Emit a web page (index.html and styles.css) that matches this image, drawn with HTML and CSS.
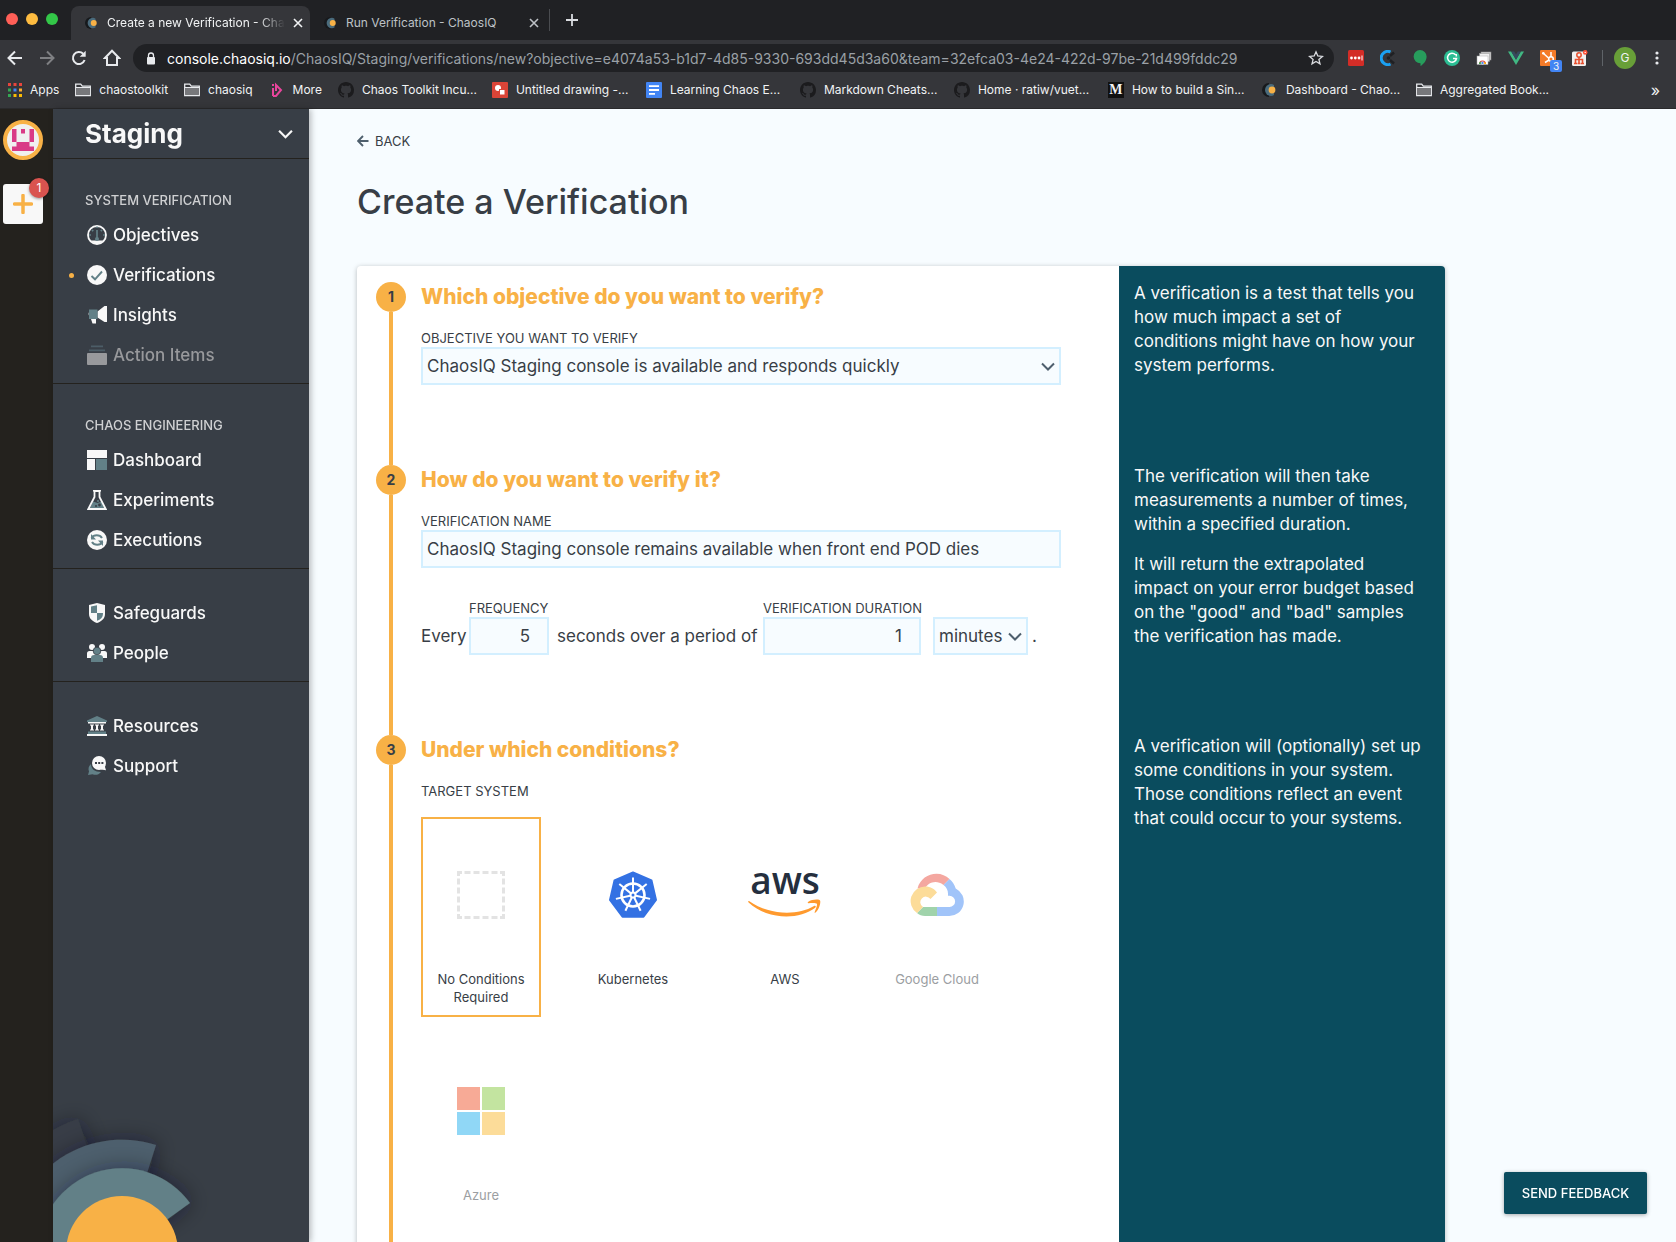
FILE: index.html
```html
<!DOCTYPE html>
<html lang="en">
<head>
<meta charset="utf-8">
<title>Create a new Verification - ChaosIQ</title>
<link rel="stylesheet" href="styles.css">
</head>
<body>
<svg class="defs" aria-hidden="true">
  <defs>
    <symbol id="favicon" viewBox="0 0 16 16"><path d="M7 1a7 7 0 0 0 0 14z" fill="#17191c"/><path d="M9 2a6 6 0 0 0 0 12 6 6 0 0 0 3-1V3a6 6 0 0 0-3-1z" fill="#4a6b7c"/><circle cx="10" cy="8" r="3.4" fill="#f8b146"/></symbol>
    <symbol id="folder" viewBox="0 0 16 16"><path d="M.7 13.5V2.2h5l1.600 2h8v9.300z" fill="#35363a" stroke="#e8eaed" stroke-width="1.300"/><path d="M1.300 6h13.400v7H1.300z" fill="#77787b"/><path d="M.7 5.500h14.600" stroke="#e8eaed"/></symbol>
    <symbol id="github" viewBox="0 0 16 16"><path fill="#1b1b1d" d="M8 0C3.580 0 0 3.580 0 8c0 3.540 2.290 6.530 5.470 7.590.4.070.55-.17.55-.38 0-.19-.01-.82-.01-1.490-2.010.37-2.530-.49-2.690-.94-.09-.23-.48-.94-.82-1.130-.28-.15-.68-.52-.01-.53.63-.01 1.080.58 1.230.82.72 1.210 1.870.87 2.330.66.070-.52.28-.87.51-1.070-1.780-.2-3.640-.89-3.640-3.950 0-.87.31-1.590.82-2.150-.08-.2-.36-1.020.08-2.120 0 0 .67-.21 2.200.82.64-.18 1.320-.27 2-.27s1.360.09 2 .27c1.530-1.040 2.200-.82 2.200-.82.44 1.100.16 1.920.08 2.120.51.56.82 1.270.82 2.150 0 3.070-1.870 3.750-3.650 3.950.29.25.54.73.54 1.480 0 1.070-.01 1.930-.01 2.200 0 .21.15.46.55.38A8 8 0 0 0 16 8c0-4.420-3.580-8-8-8z"/></symbol>
    <symbol id="chevron" viewBox="0 0 14 14"><path d="M1 4.500l6 6 6-6" fill="none" stroke="currentColor" stroke-width="2"/></symbol>
    <symbol id="cross" viewBox="0 0 10 10"><path d="M1 1l8 8M9 1L1 9" stroke="currentColor" stroke-width="1.600"/></symbol>
  </defs>
</svg>

<header class="chrome">
  <div class="tabstrip">
    <div class="lights"><span class="light red"></span><span class="light yellow"></span><span class="light green"></span></div>
    <div class="tab active">
      <svg class="fav"><use href="#favicon"/></svg>
      <span class="tab-title">Create a new Verification - Cha</span>
      <button class="bare" aria-label="Close tab"><svg class="close"><use href="#cross"/></svg></button>
    </div>
    <div class="tab">
      <svg class="fav"><use href="#favicon"/></svg>
      <span class="tab-title">Run Verification - ChaosIQ</span>
      <button class="bare" aria-label="Close tab"><svg class="close"><use href="#cross"/></svg></button>
    </div>
    <button class="bare newtab" aria-label="New tab"><svg width="12" height="12" viewBox="0 0 12 12"><path d="M6 0v12M0 6h12" stroke="currentColor" stroke-width="1.800"/></svg></button>
  </div>

  <div class="toolbar">
    <div class="navbtns">
      <button class="bare" aria-label="Back"><svg width="16" height="16" viewBox="0 0 16 16" fill="none" stroke="#e8eaed" stroke-width="2"><path d="M15 8H2M8 1.500 1.500 8 8 14.500"/></svg></button>
      <button class="bare" aria-label="Forward"><svg width="16" height="16" viewBox="0 0 16 16" fill="none" stroke="#7f8083" stroke-width="2"><path d="M1 8h13M8 1.500 14.500 8 8 14.500"/></svg></button>
      <button class="bare" aria-label="Reload"><svg width="16" height="16" viewBox="0 0 16 16"><path d="M13.600 10A6 6 0 1 1 12.200 3.800" fill="none" stroke="#e8eaed" stroke-width="2"/><path d="M14.700.8v6H8.700z" fill="#e8eaed"/></svg></button>
      <button class="bare" aria-label="Home"><svg width="18" height="18" viewBox="0 0 18 18"><path d="M9 1.800 16 9h-2v7H4V9H2z" fill="none" stroke="#e8eaed" stroke-width="2"/></svg></button>
    </div>
    <div class="omnibox">
      <svg width="10" height="13" viewBox="0 0 10 13"><path d="M2.500 6V3.500a2.500 2.500 0 0 1 5 0V6" fill="none" stroke="#e8eaed" stroke-width="1.300"/><rect x="1" y="5" width="8" height="7.500" rx="1" fill="#e8eaed"/></svg>
      <span class="url"><b>console.chaosiq.io</b>/ChaosIQ/Staging/verifications/new?objective=e4074a53-b1d7-4d85-9330-693dd45d3a60&amp;team=32efca03-4e24-422d-97be-21d499fddc29</span>
      <button class="bare" aria-label="Bookmark this page"><svg width="16" height="16" viewBox="0 0 16 16"><path d="M8 1.800 9.800 6l4.600.4-3.500 3 1.100 4.500L8 11.500l-4 2.400 1.100-4.500-3.500-3L6.200 6z" fill="none" stroke="#dadce0" stroke-width="1.300"/></svg></button>
    </div>
    <div class="extensions">
      <svg class="i16" viewBox="0 0 16 16"><rect width="16" height="16" rx="1.500" fill="#d32d27"/><circle cx="3.500" cy="8" r="1.400" fill="#fff"/><circle cx="7.300" cy="8" r="1.400" fill="#fff"/><circle cx="11" cy="8" r="1.400" fill="#fff"/><path d="M14 5.500v5" stroke="#fff"/></svg>
      <svg class="i16" viewBox="0 0 16 16"><path d="M10.500 2A6.600 6.600 0 1 0 10.500 14" fill="none" stroke="#1ba1f2" stroke-width="3"/><circle cx="8.500" cy="8" r="1.800" fill="#1f2023"/><path d="M10 6l4-3.500M10 10l4 3.500" stroke="#1f2023" stroke-width="2.500"/></svg>
      <svg class="i16" viewBox="0 0 16 16"><path d="M8 0a6.600 6.600 0 0 1 6.600 6.700C14.600 11 11 14.500 8.500 16v-2.800A6.600 6.600 0 1 1 8 0z" fill="#279d5c"/></svg>
      <svg class="i16" viewBox="0 0 16 16"><circle cx="8" cy="8" r="8" fill="#2bbd93"/><path d="M11.500 4.800A4.500 4.500 0 1 0 12.500 8.500H9M12.300 4v2.500" fill="none" stroke="#fff" stroke-width="1.500"/></svg>
      <svg class="i16" viewBox="0 0 16 16"><rect x="5" y="2" width="10" height="8" fill="#d8d8d8" stroke="#8a8a8a" stroke-width=".6"/><rect x="3.500" y="3.500" width="10" height="8" fill="#f0f0f0" stroke="#999" stroke-width=".6"/><rect x="1" y="6" width="11" height="8.500" fill="#fff" stroke="#aaa" stroke-width=".5"/><path d="M3 14a3.500 3.500 0 0 1 7 0" fill="#ea4335"/><path d="M3 14a3.500 3.500 0 0 1 1.200-2.500L6.500 14z" fill="#34a853"/><path d="M10 14a3.500 3.500 0 0 0-.8-2L6.500 14z" fill="#fbbc04"/><circle cx="6.500" cy="13" r="1.400" fill="#4285f4" stroke="#fff" stroke-width=".5"/></svg>
      <svg class="i16" viewBox="0 0 16 16"><path d="M0 1.500h3.200L8 9.800l4.800-8.300H16L8 15z" fill="#41b883"/><path d="M3.200 1.500H6.200L8 4.600l1.800-3.100h3L8 9.800z" fill="#35495e"/></svg>
      <div class="hub"><svg class="i16" viewBox="0 0 16 16"><rect width="16" height="16" rx="1" fill="#f47b28"/><path d="M3 3l5.500 5M11 2v5M5 12.500 9 10" stroke="#fff" stroke-width="1.500"/><circle cx="11" cy="9" r="2.300" fill="none" stroke="#fff" stroke-width="1.500"/><circle cx="3.300" cy="3.300" r="1.300" fill="#fff"/></svg><span class="hub-badge">3</span></div>
      <svg class="i16" viewBox="0 0 16 16"><rect x="0" y="1.500" width="14" height="14.500" rx="1.500" fill="#f2f0ef"/><circle cx="7" cy="5" r="2.200" fill="none" stroke="#e8502f" stroke-width="1.500"/><path d="M7 7v7M3.500 13V9.500h7V13M2 13.500h3M5.500 13.500h3M9 13.500h3" fill="none" stroke="#e8502f" stroke-width="1.600"/><circle cx="13.200" cy="2.400" r="2.300" fill="#ff5238"/><circle cx="13.200" cy="2.400" r=".7" fill="#fff"/></svg>
    </div>
    <span class="sep"></span>
    <span class="profile">G</span>
    <button class="bare" aria-label="Menu"><svg width="4" height="16" viewBox="0 0 4 16" fill="#e8eaed"><circle cx="2" cy="3" r="1.600"/><circle cx="2" cy="8" r="1.600"/><circle cx="2" cy="13" r="1.600"/></svg></button>
  </div>

  <nav class="bookmarks" aria-label="Bookmarks">
    <a href="#"><svg class="i14" viewBox="0 0 14 14"><path d="M0 0h3v3H0zM5.500 0h3v3h-3zM11 0h3v3h-3z" fill="#e8453c"/><path d="M0 5.500h3v3H0z" fill="#34a853"/><path d="M5.500 5.500h3v3h-3z" fill="#4285f4"/><path d="M11 5.500h3v3h-3z" fill="#fbab2d"/><path d="M0 11h3v3H0z" fill="#34a853"/><path d="M5.500 11h3v3h-3zM11 11h3v3h-3z" fill="#fbbc04"/></svg><span>Apps</span></a>
    <a href="#"><svg class="i16"><use href="#folder"/></svg><span>chaostoolkit</span></a>
    <a href="#"><svg class="i16"><use href="#folder"/></svg><span>chaosiq</span></a>
    <a href="#"><svg class="i16" viewBox="0 0 16 16"><path d="M4 6v8M4 2v2M4 14h3l5-6-5-5v6" fill="none" stroke="#e8459b" stroke-width="2"/></svg><span>More</span></a>
    <a class="long" href="#"><svg class="i16"><use href="#github"/></svg><span>Chaos Toolkit Incu...</span></a>
    <a class="long" href="#"><svg class="i16" viewBox="0 0 16 16"><rect width="16" height="16" rx="1" fill="#db4437"/><circle cx="6" cy="6" r="3" fill="#fff"/><rect x="7.500" y="7.500" width="5.500" height="5.500" fill="#fff" stroke="#db4437"/></svg><span>Untitled drawing -...</span></a>
    <a class="long" href="#"><svg class="i16" viewBox="0 0 16 16"><rect width="16" height="16" rx="1" fill="#4285f4"/><path d="M3 4.200h10M3 8h10M3 11.800h6" stroke="#fff" stroke-width="1.800"/></svg><span>Learning Chaos E...</span></a>
    <a class="long" href="#"><svg class="i16"><use href="#github"/></svg><span>Markdown Cheats...</span></a>
    <a class="long" href="#"><svg class="i16"><use href="#github"/></svg><span>Home · ratiw/vuet...</span></a>
    <a class="long" href="#"><span class="medium">M</span><span>How to build a Sin...</span></a>
    <a class="long" href="#"><svg class="i16"><use href="#favicon"/></svg><span>Dashboard - Chao...</span></a>
    <a class="long" href="#"><svg class="i16"><use href="#folder"/></svg><span>Aggregated Book...</span></a>
    <button class="bare more" aria-label="More bookmarks">»</button>
  </nav>
</header>

<div class="app">
  <aside class="rail">
    <a class="org" href="#" aria-label="Organization"><svg width="40" height="40" viewBox="0 0 40 40"><circle cx="20" cy="20" r="18" fill="#f0f0f0" stroke="#f8b146" stroke-width="4"/><path fill="#d93a86" d="M9 9h4.500v13H9zM26.500 9H31v13h-4.500zM18 9h4v4.500h-4zM13.500 22h13v4.500H31V31H9v-4.500h4.500z"/></svg></a>
    <button class="add" aria-label="Add team"><svg width="20" height="20" viewBox="0 0 20 20"><path d="M10 1.500v17M1.500 10h17" stroke="#f8b146" stroke-width="3.500" stroke-linecap="round"/></svg><span class="count">1</span></button>
  </aside>

  <nav class="sidebar">
    <button class="team"><span>Staging</span><svg width="15" height="15"><use href="#chevron"/></svg></button>

    <section class="group">
      <h3>SYSTEM VERIFICATION</h3>
      <a href="#"><svg class="ico" viewBox="0 0 20 20"><circle cx="10" cy="10" r="9" fill="none" stroke="#f8f8f8" stroke-width="1.800"/><path d="M3.500 15.500h13a8.500 8.500 0 0 1-13 0z" fill="#f8f8f8"/><path d="M10 5v9M2 10h2M16 10h2M5 5l1.200 1.200M15 5l-1.200 1.200M10 1.500v1.500" stroke="#628087" stroke-width="1.700"/><circle cx="10" cy="14" r="2" fill="#628087"/></svg>Objectives</a>
      <a class="current" href="#" aria-current="page"><svg class="ico" viewBox="0 0 20 20"><circle cx="10" cy="10" r="10" fill="#f8f8f8"/><path d="M4.500 11 8 14.300 15 6.500" fill="none" stroke="#628087" stroke-width="1.900"/></svg>Verifications</a>
      <a href="#"><svg class="ico" viewBox="0 0 20 20"><path d="M2.500 5A2.500 5 0 0 0 2.500 12zM10.500 6.500 17.500 1H20v16h-2.500l-7-4.500zM4 14h5v4.500H5.500z" fill="#f8f8f8"/><path d="M2 4.500h8.500V14H2z" fill="#628087"/></svg>Insights</a>
      <a class="disabled" href="#" aria-disabled="true"><svg class="ico" viewBox="0 0 20 20"><rect y="8" width="20" height="12" rx="1" fill="#98999c"/><path d="M2 4.500h16v1.700H2zM4 .6h12v1.700H4z" fill="#4c5d67"/></svg>Action Items</a>
    </section>

    <section class="group">
      <h3>CHAOS ENGINEERING</h3>
      <a href="#"><svg class="ico" viewBox="0 0 20 20"><path d="M0 0h20v8H0zM0 9h8v11H0z" fill="#f8f8f8"/><path d="M9 9h11v11H9z" fill="#628087"/></svg>Dashboard</a>
      <a href="#"><svg class="ico" viewBox="0 0 20 20"><path d="M6 11.500 2.500 19h15L14.500 11.500l-4 1.500z" fill="#628087"/><path d="M7.500 1v6L1.300 19h17.400L12.500 7V1z" fill="none" stroke="#f8f8f8" stroke-width="1.800"/><path d="M6 .8h8" stroke="#f8f8f8" stroke-width="1.500"/><circle cx="9" cy="16" r="1" fill="#383e46"/><circle cx="12.500" cy="15" r="1.400" fill="#383e46"/><circle cx="11" cy="11" r="1" fill="#628087"/></svg>Experiments</a>
      <a href="#"><svg class="ico" viewBox="0 0 20 20"><circle cx="10" cy="10" r="10" fill="#f8f8f8"/><path d="M4.500 8A6 5.500 0 0 1 15 8M5 12a6 5.500 0 0 0 10.500 0" fill="none" stroke="#628087" stroke-width="2"/><path d="M4 4v5.500h5zM16 16v-5.500h-5z" fill="#628087"/></svg>Executions</a>
    </section>

    <section class="group">
      <a href="#"><svg class="ico" viewBox="0 0 20 20"><path d="M10 0l8 2v9c0 5-4 7.500-8 9-4-1.500-8-4-8-9V2z" fill="#f8f8f8"/><path d="M10 2.200V10H4V3.600zM10 10h6c0 5-2.500 6.500-6 7.800z" fill="#628087"/></svg>Safeguards</a>
      <a href="#"><svg class="ico" viewBox="0 0 20 20"><circle cx="5" cy="4" r="3" fill="#f8f8f8"/><circle cx="15" cy="4" r="3" fill="#f8f8f8"/><path d="M0 15v-4.500A2.500 2.500 0 0 1 2.500 8h15a2.500 2.500 0 0 1 2.500 2.500V15z" fill="#f8f8f8"/><circle cx="10" cy="8" r="3.800" fill="#628087" stroke="#383e46" stroke-width=".8"/><path d="M4 19v-4a3 3 0 0 1 3-3h6a3 3 0 0 1 3 3v4z" fill="#628087"/></svg>People</a>
    </section>

    <section class="group">
      <a href="#"><svg class="ico" viewBox="0 0 20 20"><path d="M10 0l10 4.500V6H0V4.500zM1 15.500h18V18H1z" fill="#628087"/><path d="M1 6h18v1.500H1zM0 18h20v2H0zM3 8.500h4v1H6v4h1v1H3v-1h1v-4H3zM8 8.500h4v1h-1v4h1v1H8v-1h1v-4H8zM13 8.500h4v1h-1v4h1v1h-4v-1h1v-4h-1z" fill="#f8f8f8"/></svg>Resources</a>
      <a href="#"><svg class="ico" viewBox="0 0 20 20"><path d="M4 8C1.500 10 1 13 2 15.500L1 19l4.500-.8c3 1.200 6 .8 8.500-2.200C8 16 4 13 4 8z" fill="#628087"/><path d="M12 0a7 7 0 1 1 0 14 7 7 0 0 1 0-14z" fill="#f8f8f8"/><path d="M14 13.500l5 .8-1.500-5z" fill="#f8f8f8"/><path d="M8 6h2v2H8zM11.200 6h2v2h-2zM14.400 6h2v2h-2z" fill="#383e46"/></svg>Support</a>
    </section>

    <svg class="sunrise" width="256" height="162" viewBox="0 0 256 162" aria-hidden="true">
      <defs><filter id="soft" x="-30%" y="-30%" width="160%" height="160%"><feDropShadow dx="2" dy="0" stdDeviation="11" flood-color="#1c1f22" flood-opacity=".45"/></filter></defs>
      <path filter="url(#soft)" fill="#383e46" d="M69 172 25 39A140 140 0 0 0-71 172z"/>
      <path filter="url(#soft)" fill="#4e5f6d" d="M69 172 103 65A112 112 0 0 0-43 172z"/>
      <path filter="url(#soft)" fill="#628087" d="M69 172 137 123A84 84 0 0 0-15 172z"/>
      <circle cx="69" cy="172" r="56" fill="#f8b146"/>
    </svg>
  </nav>

  <main class="main">
    <a class="back" href="#"><svg width="12" height="12" viewBox="0 0 12 12"><path d="M11.500 6H1.500M6 1 1 6l5 5" fill="none" stroke="#4e5f6d" stroke-width="1.900"/></svg>BACK</a>
    <h1>Create a Verification</h1>

    <form class="card">
      <section class="step">
        <div class="track"><span class="num">1</span></div>
        <div class="fields">
          <h2>Which objective do you want to verify?</h2>
          <label for="objective">OBJECTIVE YOU WANT TO VERIFY</label>
          <div class="select"><select id="objective"><option>ChaosIQ Staging console is available and responds quickly</option></select><svg><use href="#chevron"/></svg></div>
        </div>
        <div class="help"><p>A verification is a test that tells you<br>how much impact a set of<br>conditions might have on how your<br>system performs.</p></div>
      </section>

      <section class="step">
        <div class="track"><span class="num">2</span></div>
        <div class="fields">
          <h2>How do you want to verify it?</h2>
          <label for="name">VERIFICATION NAME</label>
          <input id="name" type="text" value="ChaosIQ Staging console remains available when front end POD dies">
          <div class="sentence">
            <span class="word every">Every</span>
            <div class="freq"><label for="freq">FREQUENCY</label><input id="freq" type="number" value="5"></div>
            <span class="word period">seconds over a period of</span>
            <div class="duration"><label for="duration">VERIFICATION DURATION</label><input id="duration" type="number" value="1"></div>
            <div class="select unit"><select aria-label="Duration unit"><option>minutes</option></select><svg><use href="#chevron"/></svg></div>
            <span class="word">.</span>
          </div>
        </div>
        <div class="help"><p>The verification will then take<br>measurements a number of times,<br>within a specified duration.</p><p>It will return the extrapolated<br>impact on your error budget based<br>on the "good" and "bad" samples<br>the verification has made.</p></div>
      </section>

      <section class="step">
        <div class="track"><span class="num">3</span></div>
        <div class="fields">
          <h2>Under which conditions?</h2>
          <p class="label">TARGET SYSTEM</p>
          <div class="targets">
            <button type="button" class="target selected"><span class="logo"><svg width="48" height="48" viewBox="0 0 48 48"><path fill="none" stroke="#e3e3e3" stroke-width="3" d="M0 1.500h5M7.500 1.500h6M16.500 1.500h6M25.500 1.500h6M34.500 1.500h6M43 1.500h5M0 46.500h5M7.500 46.500h6M16.500 46.500h6M25.500 46.500h6M34.500 46.500h6M43 46.500h5M1.500 0v5M1.500 7.500v6M1.500 16.500v6M1.500 25.500v6M1.500 34.500v6M1.500 43v5M46.500 0v5M46.500 7.500v6M46.500 16.500v6M46.500 25.500v6M46.500 34.500v6M46.500 43v5"/></svg></span><span>No Conditions Required</span></button>
            <button type="button" class="target"><span class="logo"><svg width="48" height="48" viewBox="-24 -24 48 48"><path d="M0-22.500 18.500-14.500 23 5 10.500 21.700H-10.500L-23 5-18.500-14.500z" fill="#3371e3" stroke="#3371e3" stroke-width="2" stroke-linejoin="round"/><g fill="none" stroke="#fff" stroke-width="2"><circle r="11.500" stroke-width="2.600"/><path id="spoke" d="M0-3v-14.500"/><use href="#spoke" transform="rotate(51.430)"/><use href="#spoke" transform="rotate(102.860)"/><use href="#spoke" transform="rotate(154.290)"/><use href="#spoke" transform="rotate(205.710)"/><use href="#spoke" transform="rotate(257.140)"/><use href="#spoke" transform="rotate(308.570)"/></g><circle r="3.500" fill="#fff"/><circle r="1.500" fill="#3371e3"/></svg></span><span>Kubernetes</span></button>
            <button type="button" class="target"><span class="logo"><svg width="74" height="72" viewBox="0 -12 74 72"><text x="37" y="23" text-anchor="middle" class="aws">aws</text><path d="M1 30c20 14 48 15 65 5 1.500-.8 2.500.5 1.200 1.700C50 50 18 48 .6 31.500-.2 30.500.3 29.600 1 30z" fill="#ff9a2e"/><path d="M60 31c4-3 11-3 12-1.500 1 1.500-.5 8.500-4.500 12-.7.500-1.200.2-.8-.6 1-2.500 3-7 2.200-8.200-.9-1.200-5.800-.8-8.300-.5-.8.100-1.200-.6-.6-1.200z" fill="#ff9a2e"/></svg></span><span>AWS</span></button>
            <button type="button" class="target muted" disabled><span class="logo"><svg width="54" height="44" viewBox="0 0 54 44"><path d="M7.500 15.500C10 6 18 .8 26.500.8c5 0 9.500 2 13 5.200L33.500 12c-8-6-16-1.500-18 3z" fill="#f4a7a0"/><path d="M39.500 6c3 2.500 5 5.700 6.200 9.500A14.500 14.500 0 0 1 39 43H27v-9h12.500a5.600 5.600 0 0 0 0-11.200H38v-2c0-3.500-1.500-6.500-4.500-8.800z" fill="#a1c4f9"/><path d="M13 34h14v9H15c-3 0-6-1-8-3z" fill="#a0d3ab"/><path d="M7 40A14.500 14.500 0 0 1 15.500 13.500c5 0 9 2.500 11.500 6L20.500 26A5.600 5.600 0 1 0 13 34z" fill="#fcdc99"/></svg></span><span>Google Cloud</span></button>
            <button type="button" class="target muted" disabled><span class="logo"><svg width="48" height="48" viewBox="0 0 48 48"><path d="M0 0h23v23H0z" fill="#f7aa96"/><path d="M25 0h23v23H25z" fill="#c3e4a0"/><path d="M0 25h23v23H0z" fill="#90d7f6"/><path d="M25 25h23v23H25z" fill="#fcdc99"/></svg></span><span>Azure</span></button>
          </div>
        </div>
        <div class="help"><p>A verification will (optionally) set up<br>some conditions in your system.<br>Those conditions reflect an event<br>that could occur to your systems.</p></div>
      </section>
    </form>
  </main>
</div>
<button class="feedback">SEND FEEDBACK</button>
</body>
</html>
```
FILE: styles.css
```css
* { box-sizing: border-box; }

body {
  margin: 0;
  height: 100vh;
  display: flex;
  flex-direction: column;
  overflow: hidden;
  font-family: Inter, "Liberation Sans", sans-serif;
  color: #383e46;
}

button, input, select { font: inherit; color: inherit; }
a { color: inherit; text-decoration: none; }
svg { flex: none; display: block; }
h1, h2, h3, p { margin: 0; }
.defs { position: absolute; width: 0; height: 0; }
.bare { border: 0; padding: 0; background: none; display: flex; flex: none; }
.i16 { width: 16px; height: 16px; }
.i14 { width: 14px; height: 14px; }

/* Browser window */
.chrome { flex: none; background: #35363a; border-bottom: 1px solid #2a2a2c; font-size: 12px; color: #f1f3f4; }
.tabstrip { display: flex; height: 40px; background: #202124; }
.lights { display: flex; gap: 8px; width: 71px; padding: 13px 0 0 6px; }
.light { width: 12px; height: 12px; border-radius: 50%; }
.red { background: #ff5f57; }
.yellow { background: #febc40; }
.green { background: #33c748; }
.tab { display: flex; align-items: center; gap: 8px; width: 239px; height: 34px; margin-top: 6px; padding: 0 10px 1px 14px; color: #bdc1c6; }
.tab.active { background: #35363a; border-radius: 8px 8px 0 0; color: #f1f3f4; }
.tab-title { flex: 1; white-space: nowrap; }
.active .tab-title { mask-image: linear-gradient(90deg, #000 85%, transparent); }
.fav { width: 14px; height: 14px; }
.close { width: 10px; height: 10px; }
.newtab { align-items: center; align-self: center; height: 22px; padding: 0 16px; border-left: 1px solid #4a4c50; color: #dadce0; }
.toolbar { display: flex; align-items: center; height: 36px; padding: 0 17px 0 7px; }
.navbtns { display: flex; align-items: center; gap: 16px; width: 126px; }
.omnibox { display: flex; align-items: center; flex: 1; min-width: 0; height: 28px; padding: 0 10px 0 13px; border-radius: 14px; background: #202124; }
.url { flex: 1; margin-left: 11px; overflow: hidden; white-space: nowrap; font-size: 14px; color: #9aa0a6; }
.url b { font-weight: 400; color: #fff; }
.extensions { display: flex; gap: 16px; margin-left: 14px; }
.hub { position: relative; }
.hub-badge { position: absolute; left: 10px; top: 10px; width: 12px; border-radius: 2px; background: #4285f4; font-size: 10px; line-height: 12px; text-align: center; }
.sep { width: 1px; height: 16px; margin: 0 11px 0 14px; background: #5f6368; }
.profile { width: 22px; height: 22px; margin-right: 19px; border-radius: 50%; background: #689f38; line-height: 22px; text-align: center; }
.bookmarks { display: flex; align-items: center; gap: 16px; height: 32px; padding: 0 16px 5px 8px; }
.bookmarks a { display: flex; align-items: center; gap: 8px; white-space: nowrap; }
.bookmarks .long { width: 138px; }
.medium { width: 16px; height: 16px; background: #111; font: 700 14px/16px "Liberation Serif", serif; text-align: center; }
.more { margin-left: auto; font-size: 16px; }

/* Application frame */
.app { display: flex; flex: 1; min-height: 0; }
.rail { display: flex; flex-direction: column; gap: 24px; width: 53px; padding: 11px 3px; background: #24221e; }
.org { display: block; width: 40px; height: 40px; }
.add { position: relative; display: grid; place-items: center; width: 40px; height: 40px; border: 0; border-radius: 3px; background: #f8f8f8; }
.count { position: absolute; top: -6px; right: -6px; width: 20px; height: 20px; border-radius: 50%; background: #d9534f; box-shadow: 0 1px 3px #0006; color: #fff; font-size: 12px; line-height: 20px; }

.sidebar { position: relative; z-index: 1; width: 256px; background: #383e46; box-shadow: 2px 0 6px #0004; color: #f8f8f8; }
.team { display: flex; justify-content: space-between; align-items: center; width: 100%; height: 50px; padding: 0 16px 0 32px; border: 0; border-bottom: 1px solid #24221e; background: none; font-size: 26px; font-weight: 700; }
.group { padding: 24px 16px 8px 32px; border-bottom: 1px solid #24221e; }
.group:last-of-type { border-bottom: 0; }
.group h3 { margin: 7px 0 5px; color: #cfd0d2; font-size: 13px; font-weight: 500; line-height: 20px; white-space: nowrap; }
.group a { position: relative; display: flex; align-items: center; gap: 6px; height: 40px; padding-left: 2px; font-size: 17px; font-weight: 500; }
.group .disabled { color: #98999c; }
.current::before { content: ""; position: absolute; left: -16px; width: 5px; height: 5px; border-radius: 50%; background: #f8b146; }
.ico { width: 20px; height: 20px; }
.sunrise { position: absolute; left: 0; bottom: 0; overflow: hidden; }

.main { flex: 1; min-width: 0; padding: 23px 48px; overflow: auto; scrollbar-width: none; background: #f7fcff; }
.back { display: flex; align-items: center; gap: 6px; width: max-content; font-size: 13px; line-height: 18px; }
h1 { margin: 30px 0 42px; font-size: 34px; font-weight: 500; line-height: 44px; }

.card { max-width: 1088px; border-radius: 4px; background: #fff; box-shadow: 0 1px 5px #0004; }
.step { display: grid; grid-template-columns: 64px 1fr 326px; }
.track { display: flex; flex-direction: column; align-items: center; padding-left: 4px; }
.track::before, .track::after { content: ""; width: 4px; background: #f8b146; }
.track::before { height: 16px; }
.track::after { flex: 1; }
.step:first-child .track::before { background: none; }
.num { width: 30px; height: 30px; border-radius: 50%; background: #f8b146; font-size: 14px; font-weight: 700; line-height: 30px; text-align: center; }
.fields { min-width: 0; padding: 16px 58px 64px 0; }
h2 { margin-bottom: 17px; color: #f8b146; font-size: 21px; font-weight: 800; line-height: 30px; }
label, .label { display: block; font-size: 13px; line-height: 18px; white-space: nowrap; }
input, select { display: block; width: 100%; height: 38px; padding: 0 4px; border: 2px solid #d3efff; border-radius: 0; outline: 0; appearance: none; background: #f7fcff; font-size: 17px; }
input[type="number"] { padding-right: 17px; text-align: right; appearance: textfield; }
input::-webkit-inner-spin-button { display: none; }
.select { position: relative; }
.select svg { position: absolute; right: 6px; top: 12px; width: 14px; height: 14px; color: #4e5f6d; pointer-events: none; }
.sentence { display: flex; align-items: flex-end; margin-top: 31px; }
.word { font-size: 17px; line-height: 38px; white-space: nowrap; }
.every { width: 48px; }
.freq { width: 80px; }
.period { width: 214px; padding-left: 8px; }
.duration { width: 158px; margin-right: 12px; }
.unit { width: 95px; margin-right: 4px; }
.help { padding: 15px; background: #0a4c5e; color: #f8f8f8; font-size: 17px; line-height: 24px; white-space: nowrap; }
.step:first-child .help { border-top-right-radius: 4px; }
.help p + p { margin-top: 16px; }

.targets { display: flex; flex-wrap: wrap; gap: 16px 32px; margin-top: 17px; }
.target { display: flex; flex-direction: column; align-items: center; width: 120px; height: 200px; padding: 0 12px; border: 2px solid transparent; background: none; font-size: 13px; line-height: 18px; text-align: center; }
.target.selected { border-color: #f8b146; }
.target.muted { color: #9b9ea2; }
.logo { display: grid; place-items: center; height: 151px; }
.logo + span { flex: none; width: 92px; }
.aws { font: 600 37px "Open Sans", sans-serif; fill: #252f3e; }

.feedback { position: fixed; right: 29px; bottom: 28px; width: 143px; height: 42px; padding: 0; border: 0; border-radius: 2px; background: #0a4c5e; box-shadow: 0 1px 4px #0005; color: #fff; font-size: 13px; font-weight: 500; }
```
